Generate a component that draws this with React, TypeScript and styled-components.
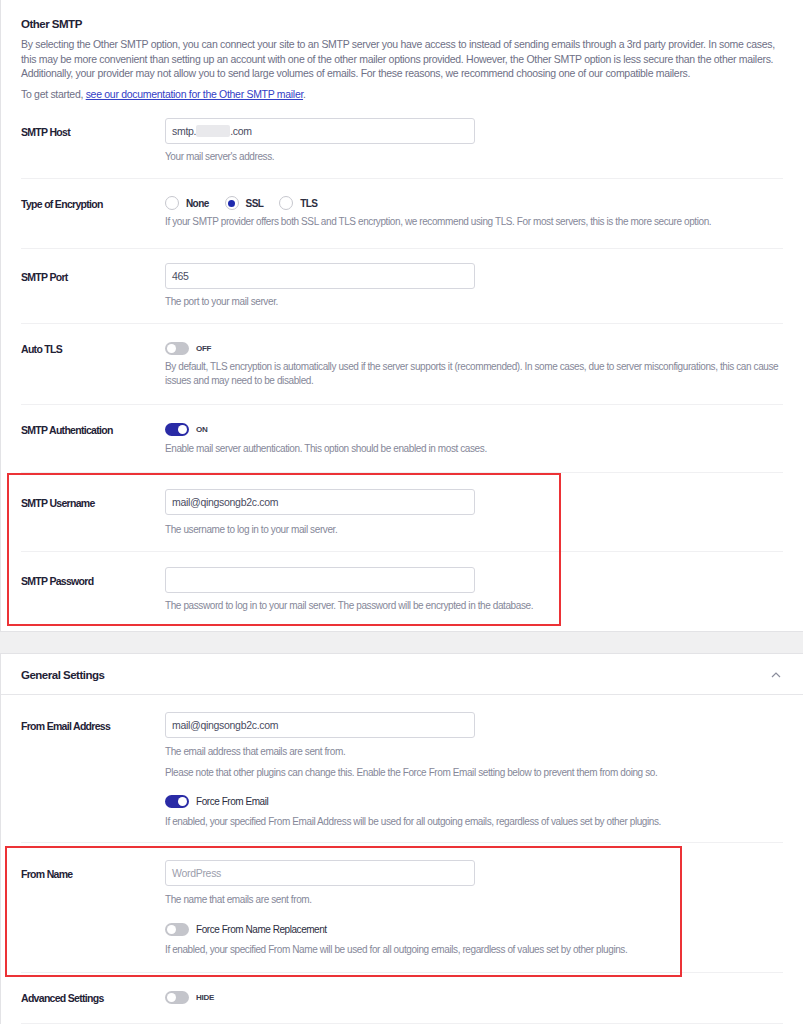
import React from 'react'
import styled, { createGlobalStyle } from 'styled-components'

const GlobalStyle = createGlobalStyle`
  body {
    margin: 0;
    background: #f0f0f1;
    font-family: "Liberation Sans", Arial, sans-serif;
    color: #1f2236;
  }
`

type Inset = { top: number; right: number; bottom: number; left: number }

const encryptions = [
  { name: 'None', checked: false },
  { name: 'SSL', checked: true },
  { name: 'TLS', checked: false },
]

export default function App() {
  return (
    <Page>
      <GlobalStyle />
      <Card>
        <Intro>
          <Heading>Other SMTP</Heading>
          <Lead>
            By selecting the Other SMTP option, you can connect your site to an SMTP server you have access to instead of
            sending emails through a 3rd party provider. In some cases,
            <br />
            this may be more convenient than setting up an account with one of the other mailer options provided. However,
            the Other SMTP option is less secure than the other mailers.
            <br />
            Additionally, your provider may not allow you to send large volumes of emails. For these reasons, we recommend
            choosing one of our compatible mailers.
          </Lead>
          <Lead $last>
            To get started, <DocLink href="#">see our documentation for the Other SMTP mailer</DocLink>.
          </Lead>
        </Intro>
        <Rows>
          <Row $pt={16}>
            <Label $h={26}>SMTP Host</Label>
            <Field>
              <TextBox>
                smtp.<Blur />.com
              </TextBox>
              <Help>Your mail server's address.</Help>
            </Field>
          </Row>
          <Row $pt={14} $pb={19}>
            <Label $h={20}>Type of Encryption</Label>
            <Field>
              <RadioGroup>
                {encryptions.map((e) => (
                  <RadioItem key={e.name}>
                    <Radio $checked={e.checked} />
                    {e.name}
                  </RadioItem>
                ))}
              </RadioGroup>
              <Help $gap={2}>
                If your SMTP provider offers both SSL and TLS encryption, we recommend using TLS. For most servers, this is
                the more secure option.
              </Help>
            </Field>
          </Row>
          <Row $pt={14} $pb={15}>
            <Label $h={26}>SMTP Port</Label>
            <Field>
              <TextBox>465</TextBox>
              <Help>The port to your mail server.</Help>
            </Field>
          </Row>
          <Row $pt={14} $pb={17}>
            <Label $h={20}>Auto TLS</Label>
            <Field>
              <ToggleLine>
                <Switch $on={false} />
                <SwitchState>OFF</SwitchState>
              </ToggleLine>
              <Help $gap={2}>
                By default, TLS encryption is automatically used if the server supports it (recommended). In some cases, due
                to server misconfigurations, this can cause
                <br />
                issues and may need to be disabled.
              </Help>
            </Field>
          </Row>
          <Row $pt={14} $pb={16}>
            <Label $h={20}>SMTP Authentication</Label>
            <Field>
              <ToggleLine>
                <Switch $on />
                <SwitchState>ON</SwitchState>
              </ToggleLine>
              <Help $gap={3}>Enable mail server authentication. This option should be enabled in most cases.</Help>
            </Field>
          </Row>
          <Highlight $inset={{ top: 0, right: 222, bottom: 5, left: -14 }}>
            <Row $pt={16}>
              <Label $h={26}>SMTP Username</Label>
              <Field>
                <TextBox>mail@qingsongb2c.com</TextBox>
                <Help $gap={8}>The username to log in to your mail server.</Help>
              </Field>
            </Row>
            <Row $pb={18} $last>
              <Label $h={26}>SMTP Password</Label>
              <Field>
                <TextBox />
                <Help>The password to log in to your mail server. The password will be encrypted in the database.</Help>
              </Field>
            </Row>
          </Highlight>
        </Rows>
      </Card>

      <Card>
        <CardHeader>
          <HeaderTitle>General Settings</HeaderTitle>
          <svg width="10" height="6" viewBox="0 0 10 6">
            <polyline points="1,5 5,1 9,5" fill="none" stroke="#8b8d9c" strokeWidth="1.2" />
          </svg>
        </CardHeader>
        <Rows>
          <Row $pt={17} $pb={14}>
            <Label $h={26}>From Email Address</Label>
            <Field>
              <TextBox>mail@qingsongb2c.com</TextBox>
              <Help $gap={7}>The email address that emails are sent from.</Help>
              <Help $gap={8}>
                Please note that other plugins can change this. Enable the Force From Email setting below to prevent them
                from doing so.
              </Help>
              <ToggleLine $gap={12}>
                <Switch $on />
                <SwitchCaption>Force From Email</SwitchCaption>
              </ToggleLine>
              <Help $gap={3}>
                If enabled, your specified From Email Address will be used for all outgoing emails, regardless of values
                set by other plugins.
              </Help>
            </Field>
          </Row>
          <Highlight $inset={{ top: 3, right: 101, bottom: -4, left: -16 }}>
            <Row $pt={17} $pb={16}>
              <Label $h={26}>From Name</Label>
              <Field>
                <TextBox $placeholder>WordPress</TextBox>
                <Help $gap={7}>The name that emails are sent from.</Help>
                <ToggleLine $gap={13}>
                  <Switch $on={false} />
                  <SwitchCaption>Force From Name Replacement</SwitchCaption>
                </ToggleLine>
                <Help $gap={3}>
                  If enabled, your specified From Name will be used for all outgoing emails, regardless of values set by
                  other plugins.
                </Help>
              </Field>
            </Row>
          </Highlight>
          <Row $pt={14}>
            <Label $h={20}>Advanced Settings</Label>
            <Field>
              <ToggleLine>
                <Switch $on={false} />
                <SwitchState>HIDE</SwitchState>
              </ToggleLine>
            </Field>
          </Row>
        </Rows>
      </Card>
    </Page>
  )
}

const Page = styled.div`
  display: flex;
  flex-direction: column;
  gap: 23px;
  padding-left: 1px;
`

const Card = styled.section`
  background: #fff;
  box-shadow: 0 0 0 1px #e3e3e6;
`

const Intro = styled.div`
  padding: 15px 20px 0;
`

const Heading = styled.h2`
  margin: 0 0 4px;
  font-size: 11.5px;
  line-height: 18px;
  font-weight: 700;
  letter-spacing: -0.5px;
  color: #1f2236;
`

const Lead = styled.p<{ $last?: boolean }>`
  margin: 0 0 ${(p) => (p.$last ? 0 : 6.5)}px;
  font-size: 10.5px;
  line-height: 14.5px;
  letter-spacing: -0.3px;
  white-space: nowrap;
  color: #6e7086;
`

const DocLink = styled.a`
  color: #3340c6;
  text-decoration: underline;
`

const Rows = styled.div`
  padding: 0 20px;
`

const Row = styled.div<{ $last?: boolean; $pt?: number; $pb?: number }>`
  display: grid;
  grid-template-columns: 144px 1fr;
  align-items: start;
  padding: ${(p) => p.$pt ?? 15}px 0 ${(p) => p.$pb ?? 15}px;
  border-bottom: ${(p) => (p.$last ? 'none' : '1px solid #f0f0f2')};
`

const Label = styled.div<{ $h: number }>`
  padding-top: 1px;
  line-height: ${(p) => p.$h}px;
  font-size: 10.5px;
  font-weight: 700;
  letter-spacing: -0.7px;
  color: #1f2236;
`

const Field = styled.div`
  display: flex;
  flex-direction: column;
  align-items: flex-start;
`

const TextBox = styled.div<{ $placeholder?: boolean }>`
  box-sizing: border-box;
  width: 310px;
  height: 26px;
  padding: 0 6px;
  display: flex;
  align-items: center;
  border: 1px solid #d6d7de;
  border-radius: 3px;
  font-size: 10.5px;
  letter-spacing: -0.3px;
  color: ${(p) => (p.$placeholder ? '#9c9eac' : '#4a4c5f')};
`

const Blur = styled.span`
  display: inline-block;
  width: 34px;
  height: 12px;
  background: #e9e9ec;
  border-radius: 2px;
`

const Help = styled.p<{ $gap?: number }>`
  margin: ${(p) => p.$gap ?? 6}px 0 0;
  font-size: 10px;
  line-height: 13.5px;
  letter-spacing: -0.4px;
  white-space: nowrap;
  color: #868899;
`

const RadioGroup = styled.div`
  display: flex;
  align-items: center;
  height: 20px;
  gap: 16px;
`

const RadioItem = styled.label`
  display: flex;
  align-items: center;
  gap: 7px;
  font-size: 10px;
  font-weight: 700;
  letter-spacing: -0.6px;
  color: #2c2e42;
`

const Radio = styled.span<{ $checked: boolean }>`
  box-sizing: border-box;
  width: 14px;
  height: 14px;
  border-radius: 50%;
  border: 1px solid #c6c7ce;
  display: flex;
  align-items: center;
  justify-content: center;

  &::after {
    content: '';
    width: 7px;
    height: 7px;
    border-radius: 50%;
    background: ${(p) => (p.$checked ? '#1e2aae' : 'transparent')};
  }
`

const ToggleLine = styled.div<{ $gap?: number }>`
  display: flex;
  align-items: center;
  height: 20px;
  gap: 7px;
  margin-top: ${(p) => p.$gap ?? 0}px;
`

const Switch = styled.span<{ $on: boolean }>`
  position: relative;
  width: 24px;
  height: 13px;
  border-radius: 7px;
  background: ${(p) => (p.$on ? '#2a2ba6' : '#c4c5cb')};

  &::after {
    content: '';
    position: absolute;
    top: 2px;
    left: ${(p) => (p.$on ? '13px' : '2px')};
    width: 9px;
    height: 9px;
    border-radius: 50%;
    background: #fff;
  }
`

const SwitchState = styled.span`
  font-size: 8px;
  font-weight: 700;
  letter-spacing: -0.3px;
  color: #3a3c4e;
`

const SwitchCaption = styled.span`
  font-size: 10px;
  letter-spacing: -0.45px;
  color: #2c2e42;
`

const Highlight = styled.div<{ $inset: Inset }>`
  position: relative;

  &::after {
    content: '';
    position: absolute;
    top: ${(p) => p.$inset.top}px;
    right: ${(p) => p.$inset.right}px;
    bottom: ${(p) => p.$inset.bottom}px;
    left: ${(p) => p.$inset.left}px;
    border: 2px solid #ec3236;
    pointer-events: none;
  }
`

const CardHeader = styled.div`
  display: flex;
  align-items: center;
  justify-content: space-between;
  height: 41px;
  padding: 2px 22px 0 20px;
  box-sizing: border-box;
  border-bottom: 1px solid #e6e6e9;
`

const HeaderTitle = styled.h3`
  margin: 0;
  font-size: 11.5px;
  font-weight: 700;
  letter-spacing: -0.5px;
  color: #1f2236;
`
